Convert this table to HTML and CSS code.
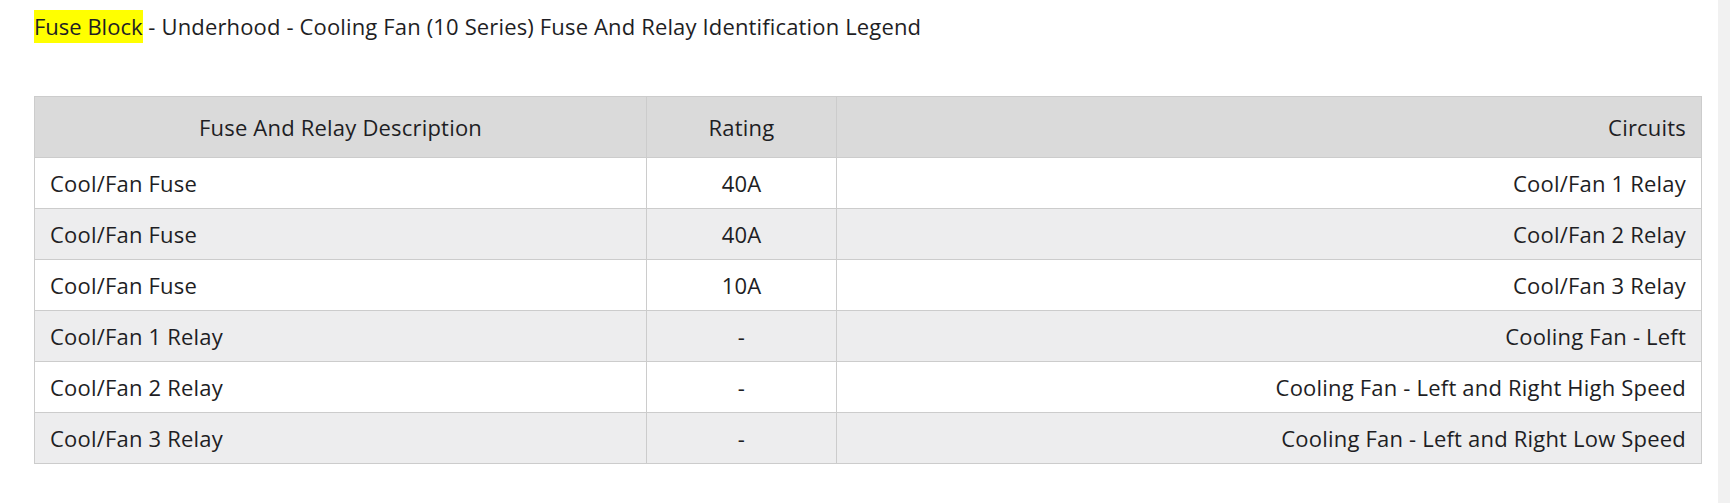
FILE: index.html
```html
<!DOCTYPE html>
<html>
<head>
<meta charset="utf-8">
<link rel="stylesheet" href="styles.css">
</head>
<body>
<div class="page">
  <div class="content">
    <div class="title"><span class="hl">Fuse Block</span> - Underhood - Cooling Fan (10 Series) Fuse And Relay Identification Legend</div>
    <table class="legend">
      <colgroup>
        <col class="c1"><col class="c2"><col class="c3">
      </colgroup>
      <thead>
        <tr><th class="left-h">Fuse And Relay Description</th><th class="center">Rating</th><th class="right">Circuits</th></tr>
      </thead>
      <tbody>
        <tr><td>Cool/Fan Fuse</td><td class="center">40A</td><td class="right">Cool/Fan 1 Relay</td></tr>
        <tr><td>Cool/Fan Fuse</td><td class="center">40A</td><td class="right">Cool/Fan 2 Relay</td></tr>
        <tr><td>Cool/Fan Fuse</td><td class="center">10A</td><td class="right">Cool/Fan 3 Relay</td></tr>
        <tr><td>Cool/Fan 1 Relay</td><td class="center">-</td><td class="right">Cooling Fan - Left</td></tr>
        <tr><td>Cool/Fan 2 Relay</td><td class="center">-</td><td class="right">Cooling Fan - Left and Right High Speed</td></tr>
        <tr><td>Cool/Fan 3 Relay</td><td class="center">-</td><td class="right">Cooling Fan - Left and Right Low Speed</td></tr>
      </tbody>
    </table>
  </div>
  <div class="scrollbar"></div>
</div>
</body>
</html>
```
FILE: styles.css
```css
html, body {
  margin: 0;
  padding: 0;
  background: #ffffff;
}
body {
  font-family: "Open Sans", "Liberation Sans", sans-serif;
  color: #1e1e24;
}
.page {
  display: flex;
  width: 1730px;
  height: 503px;
}
.content {
  flex: 1;
  padding: 10px 16px 0 34px;
}
.scrollbar {
  width: 12px;
  background: #f1f1f1;
}
.title {
  font-size: 22px;
  line-height: 33px;
  height: 33px;
  letter-spacing: 0.15px;
}
.hl {
  background: #ffff00;
  display: inline-block;
  line-height: 33px;
  letter-spacing: 0;
}
.legend {
  margin-top: 53px;
  width: 100%;
  border-collapse: collapse;
  table-layout: fixed;
  font-size: 22px;
  letter-spacing: 0.2px;
}
.c1 { width: 612px; }
.c2 { width: 190px; }
.legend th, .legend td {
  border: 1px solid #cccccc;
  padding: 0 15px;
  font-weight: normal;
  height: 50px;
}
.legend th {
  background: #dadada;
  height: 60px;
}
.legend tbody tr:nth-child(even) td {
  background: #ededee;
}
.left-h { text-align: center; }
.center { text-align: center; }
.right { text-align: right; }
```
